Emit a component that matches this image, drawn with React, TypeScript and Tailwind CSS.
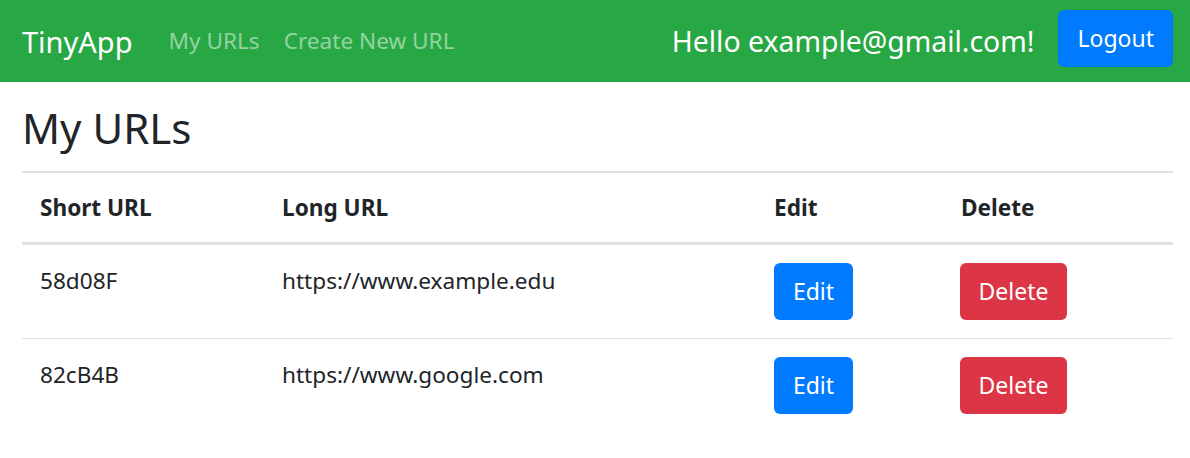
import React from "react";

const urls = [
  { id: "58d08F", longURL: "https://www.example.edu" },
  { id: "82cB4B", longURL: "https://www.google.com" },
];

const App = () => {
  return (
    <div className="min-h-screen bg-white text-[#212529] font-['Noto_Sans',sans-serif]">
      {/* Navbar */}
      <nav className="h-[82px] bg-[#28a745] flex items-center pl-[22px] pr-[17px]">
        <a className="text-[29px] text-white leading-none mr-[36px]">TinyApp</a>
        <div className="flex items-center gap-[24px] text-[22.6px] text-white/50">
          <a>My URLs</a>
          <a>Create New URL</a>
        </div>
        <div className="ml-auto flex items-center">
          <span className="text-[28.4px] text-white mr-[24px]">Hello example@gmail.com!</span>
          <button className="h-[57px] mb-[5px] px-[19px] rounded-[6px] bg-[#007bff] text-white text-[23px]">
            Logout
          </button>
        </div>
      </nav>

      {/* Content */}
      <main className="pl-[22px] pr-[17px]">
        <h2 className="text-[42px] leading-none pt-[25px] pb-[22px] font-normal">My URLs</h2>

        <div className="border-t-2 border-[#dee2e6]">
          <div className="grid grid-cols-[242px_492px_187px_1fr] h-[72px] items-center font-bold text-[22.6px] border-b-[3px] border-[#dee2e6]">
            <div className="px-[18px]">Short URL</div>
            <div className="px-[18px]">Long URL</div>
            <div className="px-[18px]">Edit</div>
            <div className="px-[18px]">Delete</div>
          </div>

          {urls.map((url, idx) => (
            <div
              key={url.id}
              className={`grid grid-cols-[242px_492px_187px_1fr] py-[18px] text-[22.6px] ${
                idx < urls.length - 1 ? "border-b border-[#dee2e6]" : ""
              }`}
            >
              <div className="px-[18px] leading-[36px]">{url.id}</div>
              <div className="px-[18px] leading-[36px]">{url.longURL}</div>
              <div className="px-[18px]">
                <button className="h-[57px] w-[79px] rounded-[6px] bg-[#007bff] text-white text-[23px]">
                  Edit
                </button>
              </div>
              <div className="px-[17px]">
                <button className="h-[57px] w-[107px] rounded-[6px] bg-[#dc3545] text-white text-[23px]">
                  Delete
                </button>
              </div>
            </div>
          ))}
        </div>
      </main>
    </div>
  );
};

export default App;
